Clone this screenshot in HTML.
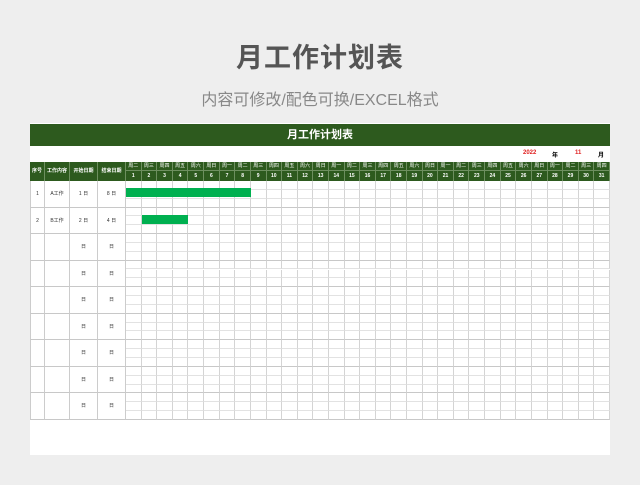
<!DOCTYPE html><html><head><meta charset="utf-8"><style>
body{margin:0;width:640px;height:485px;background:#eeeeee;font-family:"Liberation Sans","Noto Sans CJK SC",sans-serif;position:relative;overflow:hidden}
.a{position:absolute}
.t1{left:0;width:640px;top:36px;text-align:center;font-size:27px;font-weight:bold;color:#555;letter-spacing:1px}
.t2{left:0;width:640px;top:86px;text-align:center;font-size:16px;color:#888}
#card{left:30px;top:123px;width:580px;height:332px;background:#fff}
.c{position:absolute;font-size:5px;text-align:center;box-sizing:border-box}
</style></head><body>
<div class="a t1">月工作计划表</div>
<div class="a t2">内容可修改/配色可换/EXCEL格式</div>
<div class="a" id="card"></div>
<div class="a" style="left:30px;top:124px;width:580px;height:22px;background:#2d5a1e;color:#fff;font-size:11px;font-weight:bold;text-align:center;line-height:22px">月工作计划表</div>
<div class="a" style="left:523px;top:150px;font-size:6px;color:#e02020;font-weight:bold">2022</div>
<div class="a" style="left:552px;top:150px;font-size:6px;font-weight:bold">年</div>
<div class="a" style="left:575px;top:150px;font-size:6px;color:#e02020;font-weight:bold">11</div>
<div class="a" style="left:598px;top:150px;font-size:6px;font-weight:bold">月</div>
<div id="g"></div>
<script>
var g=document.getElementById('g'),h='';
function d(x,y,w,hh,st,tx){h+='<div class="c" style="left:'+x+'px;top:'+y+'px;width:'+w+'px;height:'+hh+'px;'+st+'">'+(tx||'')+'</div>';}
var G='#2d5a1e',L='border-right:1px solid #6d8f5f;';
var cols=[[30,15,'序号'],[45,25,'工作内容'],[70,28,'开始日期'],[98,28,'结束日期']];
cols.forEach(function(c){d(c[0],162,c[1],19,'background:'+G+';color:#fff;font-weight:bold;line-height:19px;'+L,c[2]);});
var wd=['周一','周二','周三','周四','周五','周六','周日'],dw=484/31;
for(var i=0;i<31;i++){var x=126+i*dw;
d(x,162,dw,9,'background:'+G+';color:#fff;line-height:9px;'+L+'border-bottom:1px solid #6d8f5f;',wd[(i+1)%7]);
d(x,171,dw,10,'background:'+G+';color:#fff;line-height:10px;font-weight:bold;'+L,i+1);}
var rs=26.55;
for(var r=0;r<9;r++){var y=181+r*rs;
var vals=r==0?['1','A工作','1 日','8 日']:r==1?['2','B工作','2 日','4 日']:['','','日','日'];
cols.forEach(function(c,k){d(c[0],y,c[1],rs,'border-right:1px solid #ccc;border-bottom:1px solid #c8c8c8;line-height:'+rs+'px;color:#333;'+(k==0?'border-left:1px solid #ccc;':''),vals[k]);});
for(var s=0;s<3;s++)for(var i=0;i<31;i++){d(126+i*dw,y+s*rs/3,dw,rs/3,'border-right:1px solid #d4d4d4;border-bottom:1px solid '+(s==2?'#c8c8c8':'#e2e2e2')+';');}
}
d(126,188,125,9,'background:#00b050;');
d(142,215,46,9,'background:#00b050;');
g.innerHTML=h;
</script>
</body></html>
